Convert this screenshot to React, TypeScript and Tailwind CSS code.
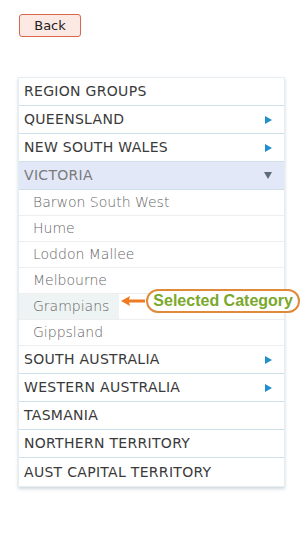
import React from "react";

const Right = () => (
  <svg width="7" height="8" viewBox="0 0 7 8" className="shrink-0">
    <path d="M0 0 L7 4 L0 8 Z" fill="#1f8fd0" />
  </svg>
);
const Down = () => (
  <svg width="8" height="7" viewBox="0 0 8 7" className="shrink-0">
    <path d="M0 0 L8 0 L4 7 Z" fill="#5e6b78" />
  </svg>
);

function Top({ label, arrow, open, last }: { label: string; arrow?: boolean; open?: boolean; last?: boolean }) {
  return (
    <div
      className={`flex h-[28px] items-center justify-between pl-[5px] pr-[12px] text-[14px] tracking-[0.3px] ${
        last ? "" : "border-b border-[#cfe0ea]"
      } ${open ? "bg-[#e3e8f8] text-[#7a7a7a]" : "bg-white text-[#3a3a3a]"}`}
    >
      <span className="whitespace-nowrap">{label}</span>
      {open ? <Down /> : arrow ? <Right /> : null}
    </div>
  );
}

function Sub({ label, selected }: { label: string; selected?: boolean }) {
  return (
    <div className="flex h-[26px] items-center border-b border-[#eeeeee] bg-white">
      <div
        className={`flex h-full items-center whitespace-nowrap pl-[14px] pr-[10px] text-[14px] font-light text-[#666666] ${
          selected ? "bg-[#eef3f3]" : ""
        }`}
      >
        {label}
      </div>
      {selected && (
        <div className="relative h-full flex-1">
          <div className="absolute left-[2px] top-[-5px] z-10 flex items-center">
            <svg width="24" height="12" viewBox="0 0 24 12">
              <path d="M0 6 L9 1 L8 4.6 L24 4.6 L24 7.4 L8 7.4 L9 11 Z" fill="#ee7a22" />
            </svg>
            <div
              className="ml-[1px] flex h-[24px] items-center whitespace-nowrap rounded-full border-2 border-[#e08a3c] bg-white px-[5px] text-[16px] font-bold text-[#7aa82c]"
              style={{ fontFamily: "'Liberation Sans', Arial, sans-serif" }}
            >
              Selected Category
            </div>
          </div>
        </div>
      )}
    </div>
  );
}

export default function App() {
  return (
    <div
      className="min-h-[537px] w-[302px] overflow-hidden bg-white pt-[14px]"
      style={{ fontFamily: "'DejaVu Sans', sans-serif" }}
    >
      <button
        className="ml-[19px] flex h-[23px] w-[62px] items-center justify-center rounded-[3px] border border-[#d9674c] bg-[#fde9e4] text-[13px] text-[#222]"
      >
        Back
      </button>
      <div className="ml-[18px] mt-[40px] w-[267px] border border-[#e6edf1] shadow-[0_2px_3px_rgba(120,150,170,0.35)]">
        <Top label="REGION GROUPS" />
        <Top label="QUEENSLAND" arrow />
        <Top label="NEW SOUTH WALES" arrow />
        <Top label="VICTORIA" open />
        <Sub label="Barwon South West" />
        <Sub label="Hume" />
        <Sub label="Loddon Mallee" />
        <Sub label="Melbourne" />
        <Sub label="Grampians" selected />
        <Sub label="Gippsland" />
        <Top label="SOUTH AUSTRALIA" arrow />
        <Top label="WESTERN AUSTRALIA" arrow />
        <Top label="TASMANIA" />
        <Top label="NORTHERN TERRITORY" />
        <Top label="AUST CAPITAL TERRITORY" last />
      </div>
    </div>
  );
}
